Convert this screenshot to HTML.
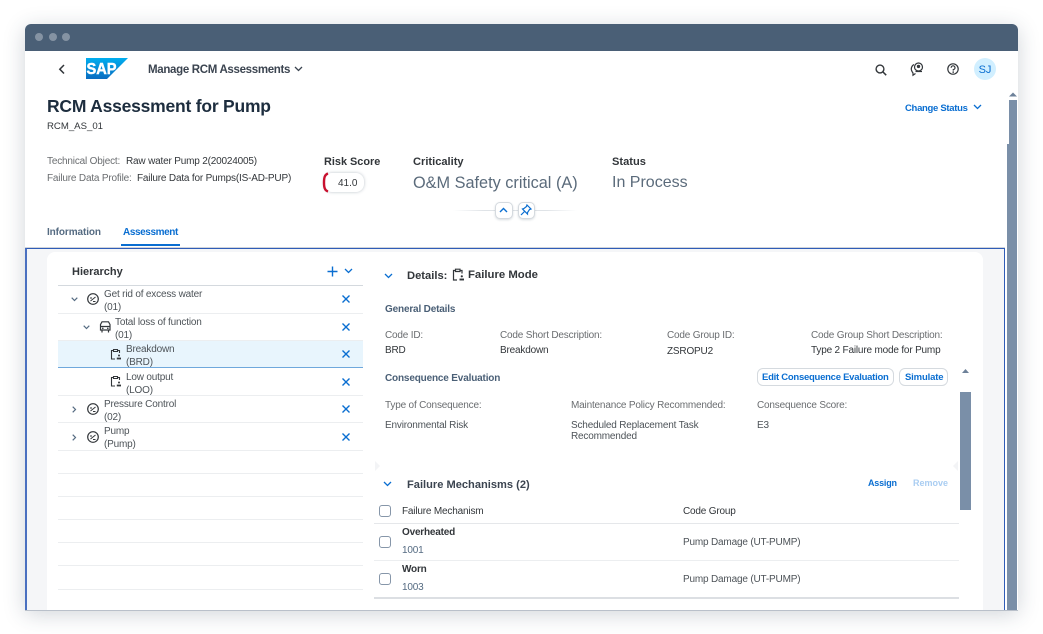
<!DOCTYPE html>
<html><head><meta charset="utf-8">
<style>
html,body{margin:0;padding:0;background:#fff}
body{width:1043px;height:634px;position:relative;overflow:hidden;font-family:"Liberation Sans",sans-serif;color:#32363a}
.t{position:absolute;white-space:nowrap;line-height:1}
.r{position:absolute}
svg{position:absolute;overflow:visible}
.lbl{color:#6a6d70;font-size:10px;letter-spacing:-.18px}
.val{color:#32363a;font-size:10px;letter-spacing:-.18px}
.sec{color:#4a5f76;font-size:10px;font-weight:bold;letter-spacing:-.17px}
.tree{color:#4d5358;font-size:10px;letter-spacing:-.18px;line-height:13px;position:absolute;white-space:nowrap}
.ln{position:absolute;height:1px;background:#eceef0}
.btn{font-size:9.500px;font-weight:bold;color:#0a6ed1}
</style></head>
<body>
<div class="r" style="left:25px;top:24px;width:993px;height:586px;background:#fff;border-radius:6px 6px 0 0;box-shadow:0 4px 22px rgba(40,60,80,.22)"></div>
<div class="r" style="left:25px;top:24px;width:993px;height:27px;background:#4a5f76;border-radius:6px 6px 0 0"></div>
<div class="r" style="left:35px;top:33px;width:8px;height:8px;border-radius:50%;background:#8593a3"></div>
<div class="r" style="left:49px;top:33px;width:8px;height:8px;border-radius:50%;background:#8593a3"></div>
<div class="r" style="left:62px;top:33px;width:8px;height:8px;border-radius:50%;background:#8593a3"></div>

<svg style="left:58px;top:64px" width="8" height="11"><path d="M6 1L1.800 5.200L6 9.500" fill="none" stroke="#32363a" stroke-width="1.500"/></svg>
<svg style="left:86px;top:58px" width="42" height="21"><defs><linearGradient id="g" x1="0" y1="0" x2="0" y2="1"><stop offset="0" stop-color="#00aeef"/><stop offset="1" stop-color="#0a6cc0"/></linearGradient></defs><path d="M0 0H42L21 21H0Z" fill="url(#g)"/><text x="0.500" y="16" font-family="Liberation Sans" font-weight="bold" font-size="16" fill="#fff" stroke="#fff" stroke-width=".5" textLength="30" lengthAdjust="spacingAndGlyphs">SAP</text></svg>
<div class="t" style="left:148px;top:65px;font-size:11.500px;font-weight:bold;color:#3b4450;letter-spacing:-.32px">Manage RCM Assessments</div>
<svg style="left:294px;top:66px" width="9" height="7"><path d="M1 1L4.500 4.500L8 1" fill="none" stroke="#3b4450" stroke-width="1.300"/></svg>

<svg style="left:875px;top:64px" width="12" height="12"><circle cx="5" cy="5" r="3.900" fill="none" stroke="#32363a" stroke-width="1.400"/><path d="M8 8L11.200 11.200" stroke="#32363a" stroke-width="1.500"/></svg>
<svg style="left:910px;top:62px" width="14" height="14"><path d="M4 2.500A5 5 0 0 0 2 9.500L3 11V13.200L5.500 11.500" fill="none" stroke="#32363a" stroke-width="1.200"/><circle cx="8.500" cy="5" r="4" fill="none" stroke="#32363a" stroke-width="1.200"/><circle cx="8.500" cy="4.400" r="1.700" fill="#32363a"/><path d="M5.500 9.500H12" stroke="#32363a" stroke-width="1.200"/></svg>
<svg style="left:947px;top:63px" width="12" height="12"><circle cx="6" cy="6" r="5.200" fill="none" stroke="#32363a" stroke-width="1.200"/><path d="M4.200 4.800A1.900 1.900 0 1 1 6.300 6.600V7.600" fill="none" stroke="#32363a" stroke-width="1.200"/><circle cx="6.200" cy="9.100" r=".8" fill="#32363a"/></svg>
<div class="r" style="left:974px;top:58px;width:22px;height:22px;border-radius:50%;background:#d1efff"></div>
<div class="t" style="left:974px;top:65px;width:22px;text-align:center;font-size:11px;color:#0a6ed1">SJ</div>

<div class="t" style="left:47px;top:98px;font-size:17.500px;font-weight:bold;color:#1d2d3e;letter-spacing:-.22px">RCM Assessment for Pump</div>
<div class="t" style="left:47px;top:122px;font-size:9.600px;color:#32363a">RCM_AS_01</div>
<div class="t" style="left:905px;top:104px;font-size:9.500px;font-weight:bold;color:#0a6ed1;letter-spacing:-.3px">Change Status</div>
<svg style="left:973px;top:104px" width="9" height="7"><path d="M1 1L4.500 4.500L8 1" fill="none" stroke="#0a6ed1" stroke-width="1.300"/></svg>

<div class="t lbl" style="left:47px;top:157px">Technical Object:</div>
<div class="t val" style="left:126px;top:157px">Raw water Pump 2(20024005)</div>
<div class="t lbl" style="left:47px;top:174px">Failure Data Profile:</div>
<div class="t val" style="left:137px;top:174px">Failure Data for Pumps(IS-AD-PUP)</div>

<div class="t" style="left:324px;top:157px;font-size:10.900px;font-weight:bold;color:#32363a">Risk Score</div>
<div class="r" style="left:324px;top:173px;width:40px;height:19px;background:#fff;border-radius:8px;box-shadow:0 0 3px rgba(60,80,100,.35)"></div>
<svg style="left:323px;top:173px" width="6" height="19"><path d="M5 .5C2 1.500 1 4 1 9.500S2 17.500 5 18.500" fill="none" stroke="#c8102e" stroke-width="2.400"/></svg>
<div class="t" style="left:338px;top:179px;font-size:10px;color:#32363a">41.0</div>

<div class="t" style="left:413px;top:157px;font-size:11.100px;font-weight:bold;color:#32363a">Criticality</div>
<div class="t" style="left:413px;top:175px;font-size:16.300px;color:#5b6b7b">O&amp;M Safety critical (A)</div>
<div class="t" style="left:612px;top:157px;font-size:11.100px;font-weight:bold;color:#32363a">Status</div>
<div class="t" style="left:612px;top:175px;font-size:16px;color:#5b6b7b">In Process</div>

<div class="r" style="left:453px;top:210px;width:124px;height:1px;background:linear-gradient(90deg,#fff,#dfe3e7 25%,#dfe3e7 75%,#fff)"></div>
<div class="r" style="left:495px;top:202px;width:16px;height:15px;background:#fff;border:1px solid #d5dadf;border-radius:5px;box-shadow:0 1px 2px rgba(60,80,100,.2)"></div>
<svg style="left:499px;top:207px" width="9" height="6"><path d="M1 5L4.500 1.500L8 5" fill="none" stroke="#0a6ed1" stroke-width="1.400"/></svg>
<div class="r" style="left:518px;top:202px;width:15px;height:15px;background:#fff;border:1px solid #d5dadf;border-radius:5px;box-shadow:0 1px 2px rgba(60,80,100,.2)"></div>
<svg style="left:520px;top:204px" width="12" height="12"><path d="M7 1L11 5L9.500 5.500L7.500 8.500L7.500 10L2.500 5L4 4.500L6.500 2.500Z" fill="none" stroke="#0a6ed1" stroke-width="1.200"/><path d="M4.500 7.500L1 11" stroke="#0a6ed1" stroke-width="1.200"/></svg>

<div class="t" style="left:47px;top:228px;font-size:10px;font-weight:bold;color:#556b82;letter-spacing:-.1px">Information</div>
<div class="t" style="left:123px;top:228px;font-size:10px;font-weight:bold;color:#0a6ed1;letter-spacing:-.4px">Assessment</div>
<div class="r" style="left:121px;top:244px;width:59px;height:2px;background:#0a6ed1"></div>

<!-- content box -->
<div class="r" style="left:25px;top:247px;width:980px;height:1px;background:#d0d4da"></div>
<div class="r" style="left:25px;top:248px;width:980px;height:362px;background:#f5f6f8;border-top:1px solid #2f5cb8;border-left:2px solid #4a70c0;border-right:1px solid #2f5cb8;box-sizing:border-box"></div>
<div class="r" style="left:47px;top:252px;width:936px;height:358px;background:#fff;border-radius:8px 8px 0 0"></div>

<!-- page scrollbar -->
<div class="r" style="left:1009px;top:100px;width:8px;height:510px;background:#7a8fa8"></div>
<div class="r" style="left:1007px;top:144px;width:2px;height:466px;background:#7a8fa8"></div>
<svg style="left:1009px;top:92px" width="8" height="5"><path d="M0 4.500L4 .5L8 4.500Z" fill="#6d8199"/></svg>

<!-- hierarchy -->
<div class="t" style="left:72px;top:267px;font-size:11px;font-weight:bold;color:#32363a">Hierarchy</div>
<svg style="left:327px;top:266px" width="11" height="11"><path d="M5.500 .5V10.500M.5 5.500H10.500" stroke="#0a6ed1" stroke-width="1.400"/></svg>
<svg style="left:344px;top:268px" width="9" height="6"><path d="M1 1L4.500 4.500L8 1" fill="none" stroke="#0a6ed1" stroke-width="1.300"/></svg>
<div class="ln" style="left:58px;top:285px;width:305px;background:#d4d9de"></div>

<div class="r" style="left:58px;top:340px;width:305px;height:27px;background:#e8f5fd"></div>
<div class="r" style="left:58px;top:367px;width:305px;height:1px;background:#6fa8dc"></div>
<div class="ln" style="left:58px;top:313px;width:305px"></div>
<div class="ln" style="left:58px;top:340px;width:305px"></div>
<div class="ln" style="left:58px;top:395px;width:305px"></div>
<div class="ln" style="left:58px;top:422px;width:305px"></div>
<div class="ln" style="left:58px;top:450px;width:305px"></div>
<div class="ln" style="left:58px;top:473px;width:305px"></div>
<div class="ln" style="left:58px;top:496px;width:305px"></div>
<div class="ln" style="left:58px;top:519px;width:305px"></div>
<div class="ln" style="left:58px;top:542px;width:305px"></div>
<div class="ln" style="left:58px;top:565px;width:305px"></div>
<div class="ln" style="left:58px;top:589px;width:305px"></div>

<div class="tree" style="left:104px;top:288px">Get rid of excess water<br>(01)</div>
<div class="tree" style="left:115px;top:316px">Total loss of function<br>(01)</div>
<div class="tree" style="left:126px;top:343px">Breakdown<br>(BRD)</div>
<div class="tree" style="left:126px;top:371px">Low output<br>(LOO)</div>
<div class="tree" style="left:104px;top:398px">Pressure Control<br>(02)</div>
<div class="tree" style="left:104px;top:425px">Pump<br>(Pump)</div>

<svg style="left:71px;top:297px" width="7" height="5"><path d="M.7 .7L3.500 3.500L6.300 .7" fill="none" stroke="#556b82" stroke-width="1.200"/></svg>
<svg style="left:83px;top:325px" width="7" height="5"><path d="M.7 .7L3.500 3.500L6.300 .7" fill="none" stroke="#556b82" stroke-width="1.200"/></svg>
<svg style="left:72px;top:406px" width="5" height="7"><path d="M.7 .7L3.500 3.500L.7 6.300" fill="none" stroke="#556b82" stroke-width="1.200"/></svg>
<svg style="left:72px;top:434px" width="5" height="7"><path d="M.7 .7L3.500 3.500L.7 6.300" fill="none" stroke="#556b82" stroke-width="1.200"/></svg>

<svg style="left:87px;top:293px" width="12" height="12"><circle cx="6" cy="6" r="5.300" fill="none" stroke="#32363a" stroke-width="1.200"/><path d="M3.500 8L8.500 4M3 5H5M6 8.500H8.500" stroke="#32363a" stroke-width="1"/></svg>
<svg style="left:87px;top:403px" width="12" height="12"><circle cx="6" cy="6" r="5.300" fill="none" stroke="#32363a" stroke-width="1.200"/><path d="M3.500 8L8.500 4M3 5H5M6 8.500H8.500" stroke="#32363a" stroke-width="1"/></svg>
<svg style="left:87px;top:431px" width="12" height="12"><circle cx="6" cy="6" r="5.300" fill="none" stroke="#32363a" stroke-width="1.200"/><path d="M3.500 8L8.500 4M3 5H5M6 8.500H8.500" stroke="#32363a" stroke-width="1"/></svg>
<svg style="left:99px;top:321px" width="12" height="12"><path d="M1.500 3.500L3 .8H9.500L11 3.500V9H1.500ZM1.500 5.500H11M3 9V11.500M9.500 9V11.500" fill="none" stroke="#32363a" stroke-width="1.200"/><circle cx="3.800" cy="7.300" r=".8" fill="#32363a"/><circle cx="8.800" cy="7.300" r=".8" fill="#32363a"/></svg>
<svg style="left:110px;top:348px" width="12" height="13"><path d="M3 2.500H1.500V11H5M8 2.500H9.500V5M3.500 3.500V1.500H7.500V3.500Z" fill="none" stroke="#32363a" stroke-width="1.100"/><circle cx="9" cy="7.500" r="1" fill="#32363a"/><path d="M6.800 10.500H11" stroke="#32363a" stroke-width="1.800"/></svg>
<svg style="left:110px;top:375px" width="12" height="13"><path d="M3 2.500H1.500V11H5M8 2.500H9.500V5M3.500 3.500V1.500H7.500V3.500Z" fill="none" stroke="#32363a" stroke-width="1.100"/><circle cx="9" cy="7.500" r="1" fill="#32363a"/><path d="M6.800 10.500H11" stroke="#32363a" stroke-width="1.800"/></svg>

<svg style="left:342px;top:295px" width="8" height="8"><path d="M.5 .5L7.500 7.500M7.500 .5L.5 7.500" stroke="#0a6ed1" stroke-width="1.400"/></svg>
<svg style="left:342px;top:323px" width="8" height="8"><path d="M.5 .5L7.500 7.500M7.500 .5L.5 7.500" stroke="#0a6ed1" stroke-width="1.400"/></svg>
<svg style="left:342px;top:350px" width="8" height="8"><path d="M.5 .5L7.500 7.500M7.500 .5L.5 7.500" stroke="#0a6ed1" stroke-width="1.400"/></svg>
<svg style="left:342px;top:378px" width="8" height="8"><path d="M.5 .5L7.500 7.500M7.500 .5L.5 7.500" stroke="#0a6ed1" stroke-width="1.400"/></svg>
<svg style="left:342px;top:405px" width="8" height="8"><path d="M.5 .5L7.500 7.500M7.500 .5L.5 7.500" stroke="#0a6ed1" stroke-width="1.400"/></svg>
<svg style="left:342px;top:433px" width="8" height="8"><path d="M.5 .5L7.500 7.500M7.500 .5L.5 7.500" stroke="#0a6ed1" stroke-width="1.400"/></svg>

<!-- details -->
<svg style="left:384px;top:273px" width="9" height="6"><path d="M1 1L4.500 4.500L8 1" fill="none" stroke="#0a6ed1" stroke-width="1.300"/></svg>
<div class="t" style="left:407px;top:271px;font-size:11.200px;font-weight:bold;color:#32363a">Details:</div>
<svg style="left:452px;top:268px" width="13" height="14"><path d="M3 2.500H1.500V12H5M8.500 2.500H10V5.500M3.500 3.500V1.200H8V3.500Z" fill="none" stroke="#32363a" stroke-width="1.200"/><circle cx="9.800" cy="8.300" r="1.100" fill="#32363a"/><path d="M7.500 11.500H12" stroke="#32363a" stroke-width="1.900"/></svg>
<div class="t" style="left:468px;top:270px;font-size:11.350px;font-weight:bold;color:#32363a">Failure Mode</div>

<div class="t sec" style="left:385px;top:305px">General Details</div>
<div class="t lbl" style="left:385px;top:331px">Code ID:</div>
<div class="t val" style="left:385px;top:346px">BRD</div>
<div class="t lbl" style="left:500px;top:331px">Code Short Description:</div>
<div class="t val" style="left:500px;top:346px">Breakdown</div>
<div class="t lbl" style="left:667px;top:331px">Code Group ID:</div>
<div class="t val" style="left:667px;top:347px">ZSROPU2</div>
<div class="t lbl" style="left:811px;top:331px">Code Group Short Description:</div>
<div class="t val" style="left:811px;top:346px">Type 2 Failure mode for Pump</div>

<div class="t sec" style="left:385px;top:374px">Consequence Evaluation</div>
<div class="r" style="left:757px;top:368px;width:137px;height:18px;box-sizing:border-box;border:1px solid #d5dadf;border-radius:6px;background:#fff"></div>
<div class="t btn" style="left:762px;top:373px;letter-spacing:-.26px">Edit Consequence Evaluation</div>
<div class="r" style="left:899px;top:368px;width:49px;height:18px;box-sizing:border-box;border:1px solid #d5dadf;border-radius:6px;background:#fff"></div>
<div class="t btn" style="left:905px;top:373px;letter-spacing:-.15px">Simulate</div>
<svg style="left:962px;top:369px" width="7" height="4"><path d="M0 4L3.500 0L7 4Z" fill="#6d8199"/></svg>
<div class="r" style="left:960px;top:392px;width:11px;height:118px;background:#7a8fa8"></div>

<div class="t lbl" style="left:385px;top:401px">Type of Consequence:</div>
<div class="t val" style="left:385px;top:421px;color:#4d5358">Environmental Risk</div>
<div class="t lbl" style="left:571px;top:401px">Maintenance Policy Recommended:</div>
<div class="t val" style="left:571px;top:421px;color:#4d5358">Scheduled Replacement Task</div>
<div class="t val" style="left:571px;top:432px;color:#4d5358">Recommended</div>
<div class="t lbl" style="left:757px;top:401px">Consequence Score:</div>
<div class="t val" style="left:757px;top:421px;color:#4d5358">E3</div>

<svg style="left:375px;top:461px" width="6" height="10"><path d="M0 0L5 5L0 10Z" fill="#f3f4f6"/></svg>
<svg style="left:953px;top:461px" width="6" height="10"><path d="M5 0L0 5L5 10Z" fill="#f3f4f6"/></svg>

<!-- failure mechanisms -->
<svg style="left:383px;top:481px" width="9" height="6"><path d="M1 1L4.500 4.500L8 1" fill="none" stroke="#0a6ed1" stroke-width="1.300"/></svg>
<div class="t" style="left:407px;top:480px;font-size:11.100px;font-weight:bold;color:#3b4450">Failure Mechanisms (2)</div>
<div class="t" style="left:868px;top:479px;font-size:9px;font-weight:bold;color:#0a6ed1;letter-spacing:-.2px">Assign</div>
<div class="t" style="left:913px;top:479px;font-size:9px;font-weight:bold;color:#a9cdf2">Remove</div>

<div class="r" style="left:379px;top:505px;width:12px;height:12px;box-sizing:border-box;border:1px solid #8696a9;border-radius:3px;background:#fff"></div>
<div class="t val" style="left:402px;top:507px">Failure Mechanism</div>
<div class="t val" style="left:683px;top:507px">Code Group</div>
<div class="ln" style="left:374px;top:523px;width:585px;background:#e5e7ea"></div>

<div class="r" style="left:379px;top:536px;width:12px;height:12px;box-sizing:border-box;border:1px solid #8696a9;border-radius:3px;background:#fff"></div>
<div class="t" style="left:402px;top:528px;font-size:10px;font-weight:bold;color:#32363a;letter-spacing:-.2px">Overheated</div>
<div class="t val" style="left:402px;top:546px;color:#556b82">1001</div>
<div class="t val" style="left:683px;top:538px;color:#4d5358">Pump Damage (UT-PUMP)</div>
<div class="ln" style="left:374px;top:560px;width:585px"></div>

<div class="r" style="left:379px;top:573px;width:12px;height:12px;box-sizing:border-box;border:1px solid #8696a9;border-radius:3px;background:#fff"></div>
<div class="t" style="left:402px;top:565px;font-size:10px;font-weight:bold;color:#32363a;letter-spacing:-.2px">Worn</div>
<div class="t val" style="left:402px;top:583px;color:#556b82">1003</div>
<div class="t val" style="left:683px;top:575px;color:#4d5358">Pump Damage (UT-PUMP)</div>
<div class="ln" style="left:374px;top:597px;width:585px;background:#dcdfe3;height:1.500px"></div>

<div class="r" style="left:25px;top:610px;width:993px;height:1px;background:#b9c0ca"></div>
</body></html>
